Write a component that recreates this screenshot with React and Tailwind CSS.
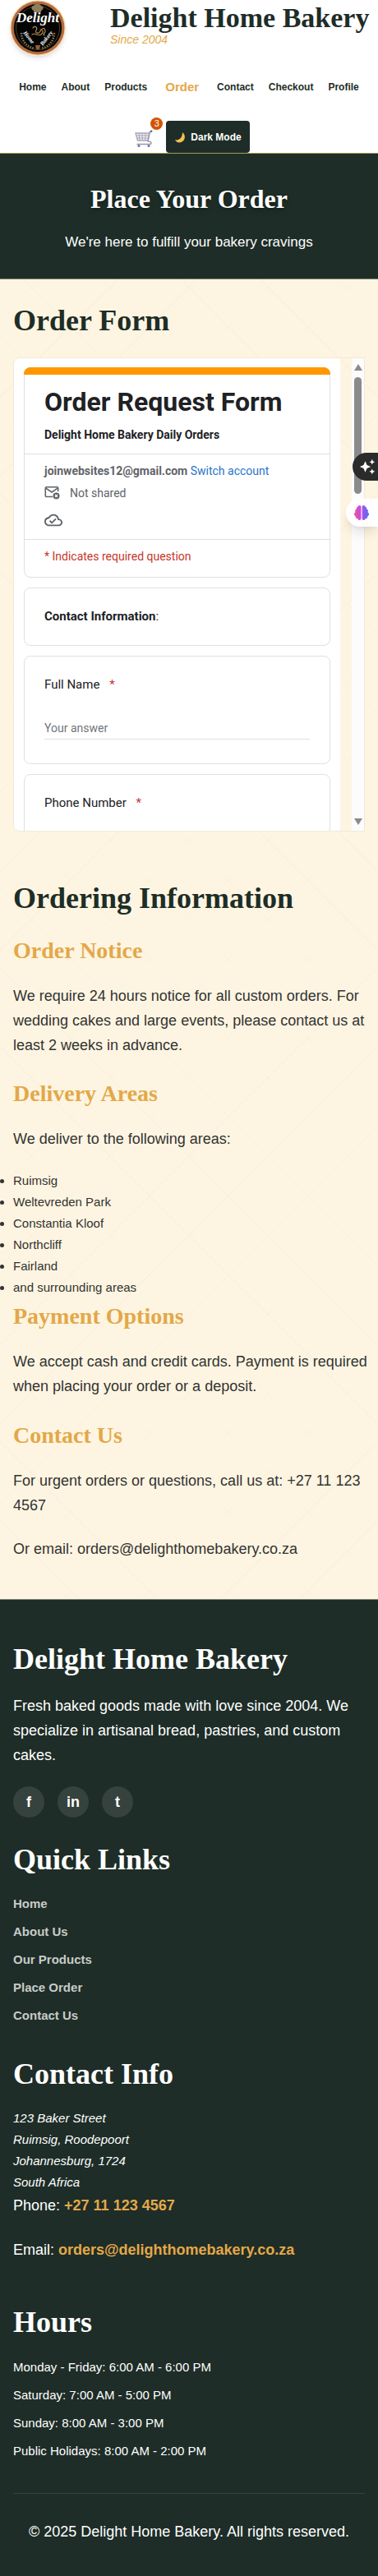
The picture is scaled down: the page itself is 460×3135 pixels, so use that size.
import React from "react";
import { MdAutoAwesome, MdOutlineCloudDone } from "react-icons/md";
import { FaBrain } from "react-icons/fa6";

const serif = "font-['Georgia','Liberation_Serif',serif] font-bold";

function Logo() {
  return (
    <svg viewBox="0 0 68 68" className="block size-[68px] rounded-full shadow-md" role="img" aria-label="Delight Home Bakery logo">
      <circle cx="34" cy="34" r="34" fill="#fbdcb5" />
      <circle cx="34" cy="34" r="32.5" fill="#b26d40" />
      <circle cx="34" cy="34" r="29.5" fill="#7d4a2b" />
      <circle cx="34" cy="34" r="29" fill="#050505" />
      <circle cx="34" cy="34" r="26.5" fill="none" stroke="#6b4c2c" strokeWidth="0.8" />
      <path d="M29 13c-3-1-4-6 0-6 1-3 8-3 9 0 4 0 3 5 0 6v2h-9z" fill="#8d7f5e" />
      <path d="M14 40c0 10 7 17 16 19M54 40c0 10-7 17-16 19" fill="none" stroke="#85805f" strokeWidth="2.500" strokeDasharray="1.500 1.500" />
      <path d="M28 34c3-4 6 0 4 3s3 5 5 1 5-5 6-1-4 4-1 6M27 42c4-3 7 3 11 0s2-6-1-6" fill="none" stroke="#b58a4e" strokeWidth="1.2" strokeLinecap="round" />
      <path d="M31 55h6l-1 5h-4z" fill="#9b5a34" />
      <text x="34" y="27" textAnchor="middle" fill="#fff" fontFamily="Liberation Serif, serif" fontStyle="italic" fontWeight="bold" fontSize="17">Delight</text>
      <text fill="#fff" fontFamily="Liberation Serif, serif" fontStyle="italic" fontWeight="bold" fontSize="7" transform="translate(16 40) rotate(52)">Home</text>
      <text fill="#fff" fontFamily="Liberation Serif, serif" fontStyle="italic" fontWeight="bold" fontSize="7" transform="translate(40 56) rotate(-52)">Bakery</text>
    </svg>
  );
}

function Cart() {
  return (
    <svg viewBox="0 0 22 22" className="block size-[22px]" fill="none">
      <path d="M1 4h16.500l-1.500 9H3.500z" fill="#f1f0f5" stroke="#a9a6b5" strokeWidth="1.300" />
      <path d="M5 4l1 9M9 4l.300 9M13 4l-.300 9M1.500 7h15.500M2.500 10h14" stroke="#a9a6b5" strokeWidth="1" />
      <path d="M21 1.500l-2.500.800L16 14c3 0 4 .500 4 2s-1 1.500-2 1.500H3" stroke="#9b98ab" strokeWidth="1.400" strokeLinecap="round" />
      <path d="M19 2l2-.500" stroke="#55617e" strokeWidth="2" />
      <circle cx="5" cy="19.500" r="1.500" fill="#5f78a8" />
      <circle cx="17" cy="19.500" r="1.500" fill="#5f78a8" />
    </svg>
  );
}

function MailOff() {
  return (
    <svg viewBox="0 0 20 18" className="block h-[18px] w-5" fill="none" stroke="#5f6368" strokeWidth="1.600">
      <path d="M10 13.500H2.500a1.200 1.200 0 0 1-1.200-1.200V3a1.200 1.200 0 0 1 1.200-1.200h13A1.200 1.200 0 0 1 16.700 3v4" />
      <path d="M1.800 3.200L9 8l7.200-4.800" />
      <circle cx="14.500" cy="12.500" r="4" fill="#5f6368" stroke="none" />
      <path d="M13 11l3 3M16 11l-3 3" stroke="#fff" strokeWidth="1.200" />
    </svg>
  );
}

const navLinks = ["Home", "About", "Products", "Order", "Contact", "Checkout", "Profile"];
const areas = ["Ruimsig", "Weltevreden Park", "Constantia Kloof", "Northcliff", "Fairland", "and surrounding areas"];
const quick = ["Home", "About Us", "Our Products", "Place Order", "Contact Us"];
const hours = [
  "Monday - Friday: 6:00 AM - 6:00 PM",
  "Saturday: 7:00 AM - 5:00 PM",
  "Sunday: 8:00 AM - 3:00 PM",
  "Public Holidays: 8:00 AM - 2:00 PM",
];

function Header() {
  return (
    <header className="border-b border-[#a89a5f] bg-white">
      <div className="flex items-start pl-3">
        <Logo />
        <div className="ml-[54px] pt-1">
          <p className={`${serif} text-[34px] leading-9 whitespace-nowrap text-[#1e2d27]`}>Delight Home Bakery</p>
          <p className="text-sm leading-4 text-[#e3a849] italic">Since 2004</p>
        </div>
      </div>
      <nav className="mt-6 flex h-7 items-center justify-center gap-[18px] text-xs font-bold">
        {navLinks.map((n) => (
          <a key={n} href="#" className={n === "Order" ? "px-1 text-[15px] text-[#e3a849]" : "text-[#1e2d27]"}>{n}</a>
        ))}
      </nav>
      <div className="mt-[27px] flex h-[39px] items-stretch justify-center gap-4 pl-2">
        <a href="#" aria-label="Cart, 3 items" className="relative flex items-center pt-1">
          <Cart />
          <span className="absolute -top-1 -right-3 flex size-[15px] items-center justify-center rounded-full bg-[#d35400] text-[11px] text-white">3</span>
        </a>
        <button type="button" className="flex items-center gap-1.5 rounded bg-[#1e2d27] px-2.5 text-xs font-bold text-white">
          <svg viewBox="0 0 14 14" className="size-[14px]"><path d="M10 1c4.500 3.500 3.500 10-1.500 12C5 14.200 2 12.500 1 10c4 1.500 9-1.500 9-9z" fill="#f5c055" /></svg>
          Dark Mode
        </button>
      </div>
    </header>
  );
}

function Field({ id, label, last }) {
  return (
    <div className={`rounded-lg border border-[#e0e0e0] px-6 pt-[22px] ${last ? "" : "pb-[29px]"}`}>
      <label htmlFor={id} className="block text-[15px] leading-6 text-[#202124]">
        {label} <span className="pl-2 text-[#c5372c]">*</span>
      </label>
      <input id={id} type="text" placeholder="Your answer" className="mt-7 block h-[27px] w-full border-b border-[#e0e0e0] text-sm outline-none placeholder:text-[#70757a]" />
    </div>
  );
}

function OrderForm() {
  return (
    <div className="mt-[23px] flex h-[577px] overflow-hidden rounded-l-lg border border-[#f0eadb] font-['Roboto',sans-serif]">
      <form className="flex min-w-0 flex-1 flex-col gap-3 bg-white px-3 pt-[11px]">
        <div className="shrink-0 rounded-lg border border-[#e0e0e0]">
          <div className="-mx-px -mt-px h-[9px] rounded-t-lg bg-[#ff9800]" />
          <div className="border-b border-[#e0e0e0] px-6 pt-3 pb-[13px]">
            <p className="text-[32px] leading-[42px] font-bold whitespace-nowrap text-[#202124]">Order Request Form</p>
            <p className="mt-[9px] text-sm leading-5 font-bold text-[#202124]">Delight Home Bakery Daily Orders</p>
          </div>
          <div className="h-[104px] border-b border-[#e0e0e0] px-6 pt-2.5 text-sm leading-5 text-[#5f6368]">
            <p><b>joinwebsites12@gmail.com</b> <a href="#" className="text-[#2a75c9]">Switch account</a></p>
            <div className="mt-[7px] flex items-center gap-[11px]"><MailOff />Not shared</div>
            <MdOutlineCloudDone className="mt-3 size-[22px]" />
          </div>
          <p className="px-6 pt-2.5 pb-[15px] text-sm leading-5 text-[#c5372c]">* Indicates required question</p>
        </div>
        <div className="shrink-0 rounded-lg border border-[#e0e0e0] px-6 pt-[22px] pb-[23px] text-[15px] leading-6 text-[#202124]"><b>Contact Information</b>:</div>
        <Field id="full-name" label="Full Name" />
        <Field id="phone" label="Phone Number" last />
      </form>
      <div className="flex w-[29px] shrink-0 justify-end" aria-hidden="true">
        <div className="flex w-[15px] flex-col items-center bg-[#fcfcfc] py-[7px]">
          <svg viewBox="0 0 10 8" className="h-2 w-2.5"><path d="M5 0l5 8H0z" fill="#8b8b8b" /></svg>
          <div className="mt-2 h-[142px] w-[9px] rounded-full bg-[#8b8b8b]" />
          <svg viewBox="0 0 10 8" className="mt-auto h-2 w-2.5"><path d="M5 8l5-8H0z" fill="#8b8b8b" /></svg>
        </div>
      </div>
    </div>
  );
}

const h2 = `${serif} text-4xl leading-[44px]`;
const h3 = `${serif} text-[28px] leading-9 text-[#e3a849]`;

export default function App() {
  return (
    <div className="relative overflow-x-hidden font-['Liberation_Sans',sans-serif] text-[#333]">
      <Header />
      <section className="border-b border-[#7d8577] bg-[#1e2d27] pt-[33px] pb-[29px] text-center text-white">
        <h1 className={`${serif} text-[32px] leading-[44px] text-shadow-lg`}>Place Your Order</h1>
        <p className="mt-4 text-[17px] leading-[30px]">We're here to fulfill your bakery cravings</p>
      </section>
      <main className="bg-[#fdf5e1] bg-[repeating-linear-gradient(45deg,transparent_0px,transparent_67px,rgba(60,50,20,0.02)_67px,rgba(60,50,20,0.02)_68px),repeating-linear-gradient(-45deg,transparent_0px,transparent_67px,rgba(60,50,20,0.02)_67px,rgba(60,50,20,0.02)_68px)]">
        <section className="px-4 pt-7">
          <h2 className={`${h2} text-[#1e2d27]`}>Order Form</h2>
          <OrderForm />
        </section>
        <section className="pt-[59px] pr-3 pb-[46px] pl-4 text-lg leading-[30px]">
          <h2 className={`${h2} text-[#1e2d27]`}>Ordering Information</h2>
          <h3 className={`${h3} mt-6`}>Order Notice</h3>
          <p className="mt-[22px]">We require 24 hours notice for all custom orders. For wedding cakes and large events, please contact us at least 2 weeks in advance.</p>
          <h3 className={`${h3} mt-[26px]`}>Delivery Areas</h3>
          <p className="mt-[22px]">We deliver to the following areas:</p>
          <ul className="mt-[23px] list-disc text-[15px] leading-[26px]">
            {areas.map((a) => <li key={a}>{a}</li>)}
          </ul>
          <h3 className={`${h3} mt-1`}>Payment Options</h3>
          <p className="mt-[22px]">We accept cash and credit cards. Payment is required when placing your order or a deposit.</p>
          <h3 className={`${h3} mt-[27px]`}>Contact Us</h3>
          <p className="mt-[22px]">For urgent orders or questions, call us at: +27 11 123 4567</p>
          <p className="mt-[23px]">Or email: orders@delighthomebakery.co.za</p>
        </section>
      </main>
      <footer className="border-t border-[#7d8577] bg-[#1e2d27] px-4 pt-[50px] pb-[39px] text-white">
        <h2 className={h2}>Delight Home Bakery</h2>
        <p className="mt-5 text-lg leading-[30px]">Fresh baked goods made with love since 2004. We specialize in artisanal bread, pastries, and custom cakes.</p>
        <div className="mt-[23px] flex gap-4">
          {["f", "in", "t"].map((s) => (
            <a key={s} href="#" className="flex size-[38px] items-center justify-center rounded-full bg-[#35423d] text-lg font-bold">{s}</a>
          ))}
        </div>
        <h2 className={`${h2} mt-[29px]`}>Quick Links</h2>
        <ul className="mt-[19px] flex flex-col gap-2 text-[15px] leading-[26px] font-bold text-[#c7cbc9]">
          {quick.map((q) => <li key={q}><a href="#">{q}</a></li>)}
        </ul>
        <h2 className={`${h2} mt-9`}>Contact Info</h2>
        <address className="mt-[19px] text-[15px] leading-[26px]">
          123 Baker Street<br />Ruimsig, Roodepoort<br />Johannesburg, 1724<br />South Africa
        </address>
        <p className="text-lg leading-[30px]">Phone: <a href="#" className="font-bold text-[#e3a849]">+27 11 123 4567</a></p>
        <p className="mt-6 text-lg leading-[30px]">Email: <a href="#" className="font-bold text-[#e3a849]">orders@delighthomebakery.co.za</a></p>
        <h2 className={`${h2} mt-[51px]`}>Hours</h2>
        <ul className="mt-5 flex flex-col gap-2 text-[15px] leading-[26px]">
          {hours.map((h) => <li key={h}>{h}</li>)}
        </ul>
        <p className="mt-[38px] border-t border-[#35423d] pt-[31px] text-center text-lg leading-[30px]">© 2025 Delight Home Bakery. All rights reserved.</p>
      </footer>
      <button type="button" aria-label="Assistant" className="absolute top-[551px] right-0 flex h-[34px] w-[31px] items-center rounded-l-full bg-[#2b2b2b] pl-2 text-white"><MdAutoAwesome className="size-5" /></button>
      <button type="button" aria-label="Brain tools" className="absolute top-[607px] right-0 flex h-[34px] w-[39px] items-center rounded-l-full bg-white pl-2.5 shadow-lg">
        <svg className="absolute size-0"><defs><linearGradient id="brain"><stop offset="0" stopColor="#f0509a" /><stop offset=".45" stopColor="#c44be8" /><stop offset="1" stopColor="#4b6ff0" /></linearGradient></defs></svg>
        <FaBrain fill="url(#brain)" className="size-[18px]" />
      </button>
    </div>
  );
}
